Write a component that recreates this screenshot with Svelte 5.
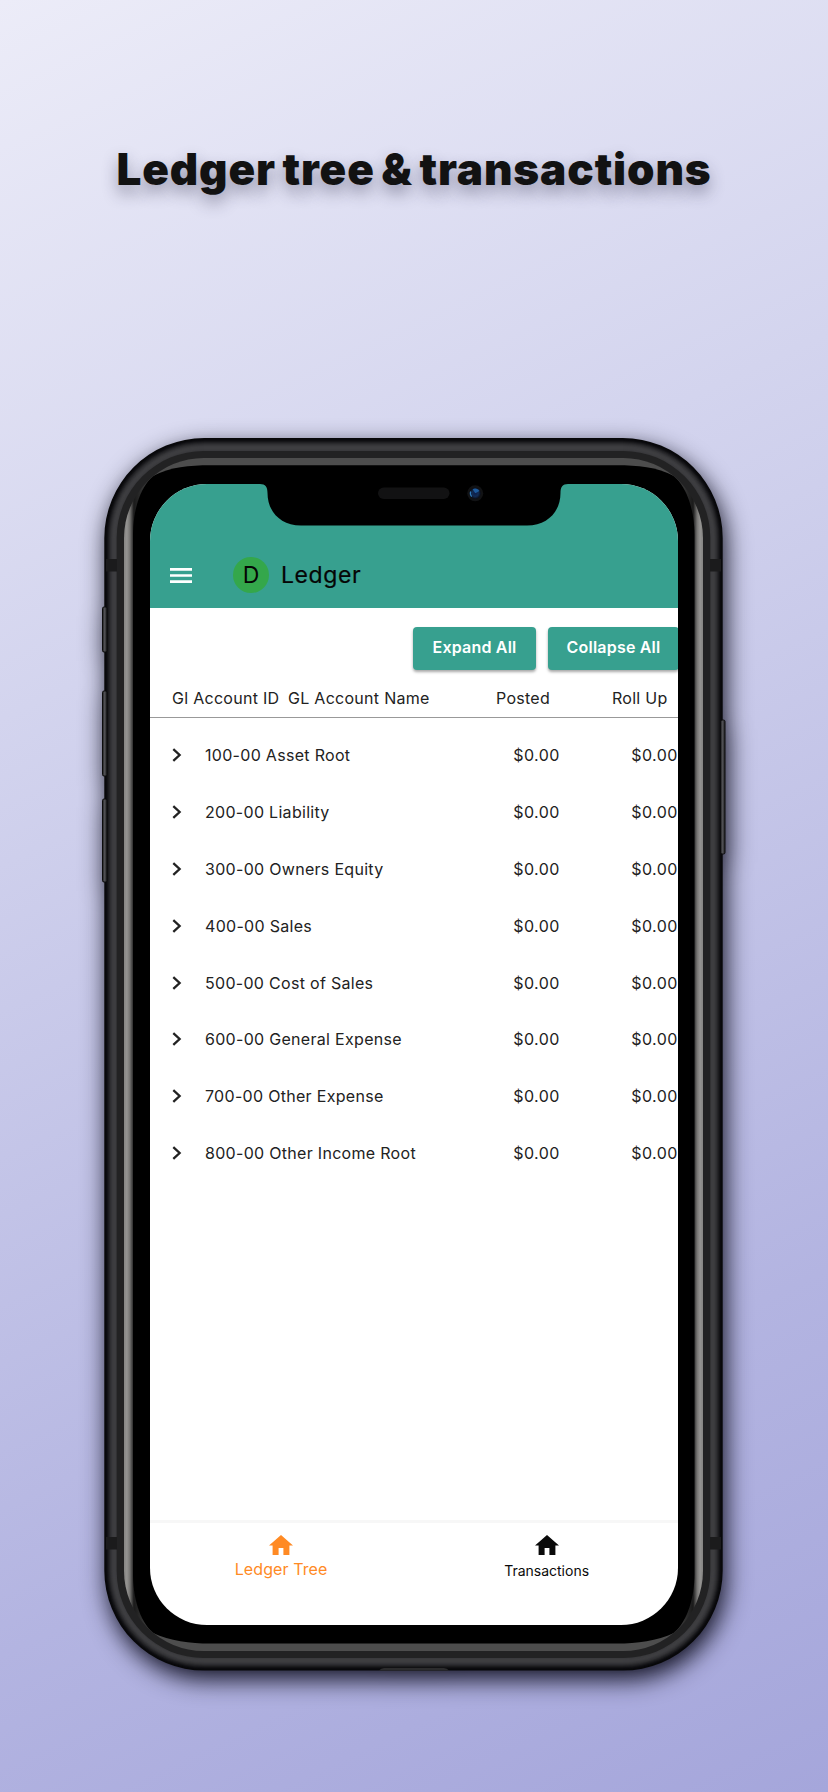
<script>
  const accounts = [
    { id: '100-00', name: 'Asset Root' },
    { id: '200-00', name: 'Liability' },
    { id: '300-00', name: 'Owners Equity' },
    { id: '400-00', name: 'Sales' },
    { id: '500-00', name: 'Cost of Sales' },
    { id: '600-00', name: 'General Expense' },
    { id: '700-00', name: 'Other Expense' },
    { id: '800-00', name: 'Other Income Root' }
  ];
  // Rounded outline with circular corners, for the nested frame rings.
  const ring = (x, y, r, b, rad) =>
    `M${x + rad} ${y}H${r - rad}A${rad} ${rad} 0 0 1 ${r} ${y + rad}V${b - rad}A${rad} ${rad} 0 0 1 ${r - rad} ${b}H${x + rad}A${rad} ${rad} 0 0 1 ${x} ${b - rad}V${y + rad}A${rad} ${rad} 0 0 1 ${x + rad} ${y}Z`;
  const shades = [9, 14, 22, 32, 41, 49, 55, 60, 62, 62, 60, 57];
  const edges = shades.map((k, i) => {
    const t = i + 1;
    return { d: ring(4.3 + t, t, 622.7 - t, 1232.6 - t, 100 - t), c: `rgb(${k},${k},${k + 3})` };
  });
  const sideKeys = [
    { x: 2.5, y: 169, h: 45 },
    { x: 2.5, y: 253, h: 85 },
    { x: 2.5, y: 361, h: 83 },
    { x: 620.5, y: 282, h: 134 }
  ];
</script>

<main>
  <h1>Ledger tree &amp; transactions</h1>

  <section class="phone">
    <svg class="frame" width="628" height="1234" viewBox="0 0 628 1234" aria-hidden="true">
      <defs>
        <linearGradient id="rail" x1="0" x2="1" y1="0" y2="0">
          <stop offset="0" stop-color="#858482" />
          <stop offset="0.005" stop-color="#959492" />
          <stop offset="0.01" stop-color="#777674" />
          <stop offset="0.017" stop-color="#1a1a1a" />
          <stop offset="0.05" stop-color="#4d4d4d" />
          <stop offset="0.95" stop-color="#4d4d4d" />
          <stop offset="0.983" stop-color="#1a1a1a" />
          <stop offset="0.99" stop-color="#777674" />
          <stop offset="0.995" stop-color="#959492" />
          <stop offset="1" stop-color="#858482" />
        </linearGradient>
        <linearGradient id="key" x1="0" x2="1" y1="0" y2="0">
          <stop offset="0" stop-color="#1c1c1d" />
          <stop offset="0.45" stop-color="#505054" />
          <stop offset="1" stop-color="#222224" />
        </linearGradient>
        <radialGradient id="lens" cx="0.5" cy="0.5" r="0.5">
          <stop offset="0" stop-color="#0c1c48" />
          <stop offset="0.55" stop-color="#122c55" />
          <stop offset="1" stop-color="#0a0d18" />
        </radialGradient>
        <clipPath id="glass"><path d={ring(24, 20, 603, 1213, 80)} /></clipPath>
      </defs>
      <path d={ring(4.3, 0, 622.7, 1232.6, 100)} fill="#080809" />
      {#each edges as e}
        <path d={e.d} fill={e.c} />
      {/each}
      {#each sideKeys as k}
        <rect x={k.x} y={k.y} width="4.5" height={k.h} rx="1.5" fill="url(#key)" stroke="#0c0c0d" stroke-width="1" />
      {/each}
      <path d={ring(16.7, 13, 610.3, 1220, 87)} fill="#222223" />
      <g fill="#1b1b1c">
        <rect x="6" y="121" width="11" height="12.5" />
        <rect x="610" y="121" width="11" height="12.5" />
        <rect x="6" y="1099" width="11" height="12.5" />
        <rect x="610" y="1099" width="11" height="12.5" />
      </g>
      <path d="M279 1232.6q2-2.5 5-2.5H344q3 0 5 2.5z" fill="#2c2c2d" />
      <g clip-path="url(#glass)">
        <rect x="24" y="20" width="579" height="1193" fill="url(#rail)" />
        <path
          fill="#000"
          d="M33 97C33 74 39 51 53 38C70 29 90 27.300 110 27.300H517C537 27.300 557 29 574 38C588 51 594.500 74 594.500 97V1136C594.500 1159 588 1182 574 1195C557 1203 537 1205.500 517 1205.500H110C90 1205.500 70 1203 53 1195C39 1182 33 1159 33 1136Z"
        />
      </g>
    </svg>

    <div class="screen">
      <svg class="notch" width="308" height="42" viewBox="0 0 308 42" aria-hidden="true">
        <path d="M0 0C5.500 0 7.500 3 7.500 9C7.500 27 20 41.500 41 41.500H267C288 41.500 300.500 27 300.500 9C300.500 3 302.500 0 308 0Z" fill="#000" />
        <rect x="118" y="3.500" width="71.500" height="11.500" rx="5.750" fill="#121213" />
        <circle cx="215.200" cy="9.300" r="8" fill="#111214" />
        <circle cx="215.200" cy="9.300" r="5.600" fill="url(#lens)" />
        <path d="M215.200 9.300L212.700 5.200A5 5 0 0 1 219.500 7z" fill="#1d5a9c" />
        <path d="M210.700 7.500a5 5 0 0 0 1 5.200" stroke="#2f78b8" stroke-width="1.200" fill="none" />
      </svg>

      <header>
        <svg class="menu" width="22" height="15" viewBox="0 0 22 15"><path d="M0 1.400H22M0 7.500H22M0 13.600H22" stroke="#fff" stroke-width="2.600" /></svg>
        <span class="avatar">D</span>
        <span class="title">Ledger</span>
      </header>

      <div class="actions">
        <button class="expand">Expand All</button>
        <button class="collapse">Collapse All</button>
      </div>

      <div class="columns">
        <span>Gl Account ID</span>
        <span>GL Account Name</span>
        <span>Posted</span>
        <span>Roll Up</span>
      </div>

      <ul>
        {#each accounts as a}
          <li>
            <svg width="10" height="14" viewBox="0 0 10 14"><path d="M1.300 1.200L7.600 7L1.300 12.800" fill="none" stroke="#222" stroke-width="2.300" /></svg>
            <span class="name">{a.id} {a.name}</span>
            <span class="amount">$0.00</span>
            <span class="amount">$0.00</span>
          </li>
        {/each}
      </ul>

      <nav>
        <div class="tab active">
          <svg width="24" height="20" viewBox="2 3 20 17" preserveAspectRatio="none"><path d="M10 20v-6h4v6h5v-8h3L12 3 2 12h3v8z" fill="currentColor" /></svg>
          <span>Ledger Tree</span>
        </div>
        <div class="tab">
          <svg width="24" height="20" viewBox="2 3 20 17" preserveAspectRatio="none"><path d="M10 20v-6h4v6h5v-8h3L12 3 2 12h3v8z" fill="currentColor" /></svg>
          <span>Transactions</span>
        </div>
      </nav>
    </div>
  </section>
</main>

<style>
  :global(body) { margin: 0; }
  main {
    box-sizing: border-box;
    width: 828px;
    height: 1792px;
    overflow: hidden;
    display: flex;
    flex-direction: column;
    align-items: center;
    padding-top: 139px;
    background: linear-gradient(155deg, #ececf8 0%, #d3d4ee 33%, #b3b4e1 76%, #a5a6db 100%);
    font-family: Inter, "Liberation Sans", sans-serif;
    color: #222;
  }
  h1 {
    margin: 0;
    height: 299px;
    line-height: 60px;
    font-size: 44px;
    font-weight: 900;
    letter-spacing: 0.88px;
    word-spacing: -3px;
    white-space: nowrap;
    color: #121212;
    text-shadow: 0 8px 16px rgba(40, 40, 70, 0.42);
  }
  .phone {
    position: relative;
    box-sizing: border-box;
    flex: none;
    width: 628px;
    height: 1234px;
    padding: 46px 0 0 50px;
  }
  .frame {
    position: absolute;
    inset: 0;
    overflow: visible;
    filter: drop-shadow(3px 9px 12px rgba(10, 10, 25, 0.95));
  }
  .screen {
    position: relative;
    width: 527.700px;
    height: 1141px;
    overflow: hidden;
    border-radius: 57px;
    background: #fff;
    display: flex;
    flex-direction: column;
  }
  .notch { position: absolute; left: 110px; top: 0; }
  header {
    box-sizing: border-box;
    flex: none;
    height: 124px;
    padding: 58px 0 0 20px;
    display: flex;
    align-items: center;
    background: #37a08f;
    color: #050505;
  }
  .avatar {
    width: 36px;
    height: 36px;
    margin: 0 12px 0 41px;
    border-radius: 50%;
    background: #34a74b;
    text-align: center;
    line-height: 36px;
    font-size: 23px;
  }
  .title { font-size: 23px; letter-spacing: 0.6px; font-weight: 400; -webkit-text-stroke: 0.2px; }
  .actions {
    flex: none;
    display: flex;
    gap: 12px;
    padding: 19px 0 0 263px;
    height: 61px;
  }
  button {
    box-sizing: border-box;
    flex: none;
    height: 43px;
    padding: 0 0 3px;
    border: 0;
    border-radius: 4px;
    background: #37a08f;
    box-shadow: 0 2px 3px rgba(0, 0, 0, 0.35);
    color: #fff;
    font: 600 16px Inter, sans-serif;
    letter-spacing: 0.2px;
  }
  .expand { width: 123px; }
  .collapse { width: 131px; }
  .columns {
    box-sizing: border-box;
    flex: none;
    height: 30px;
    padding-left: 22px;
    display: grid;
    grid-template-columns: 116px 208px 116px 80px;
    align-items: start;
    border-bottom: 1.500px solid #999;
    font-size: 16px;
    line-height: 20px;
    letter-spacing: 0.28px;
    white-space: nowrap;
  }
  ul {
    list-style: none;
    margin: 0;
    padding: 9px 0 0;
    flex: 1;
  }
  li {
    height: 56.800px;
    padding-left: 22px;
    display: grid;
    grid-template-columns: 33px 1fr auto auto;
    align-items: center;
    font-size: 16px;
    letter-spacing: 0.4px;
  }
  .name { letter-spacing: 0.3px; }
  .amount:nth-child(4) { width: 118px; text-align: right; }
  nav {
    box-sizing: border-box;
    flex: none;
    height: 105px;
    margin: 0 -1.700px;
    padding-top: 12px;
    border-top: 3px solid #f7f7f7;
    display: grid;
    grid-template-columns: 1fr 1fr;
  }
  .tab {
    display: flex;
    flex-direction: column;
    align-items: center;
    font-size: 14px;
    letter-spacing: 0;
    color: #0a0a0a;
  }
  .tab span { line-height: 20px; margin-top: 6px; }
  .tab.active { color: #ff8a24; font-size: 16px; letter-spacing: 0.1px; }
  .tab.active span { margin-top: 4px; }
</style>
